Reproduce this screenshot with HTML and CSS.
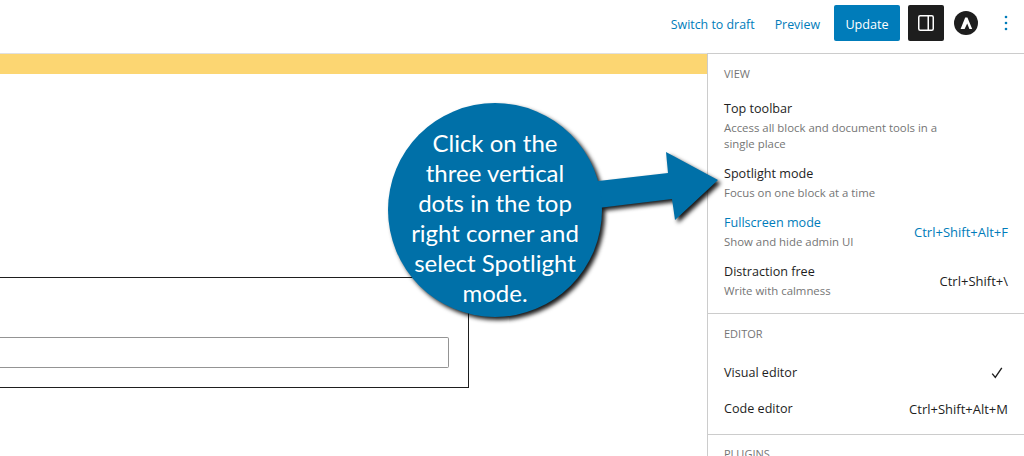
FILE: index.html
```html
<!DOCTYPE html>
<html lang="en">
<head>
    <meta charset="UTF-8">
    <meta name="viewport" content="width=device-width, initial-scale=1.0">
    <title>Spotlight mode</title>
    <link rel="stylesheet" href="styles.css">
</head>
<body>

    <header class="topbar">
        <a class="top-link">Switch to draft</a>
        <a class="top-link preview-link">Preview</a>
        <button class="update-btn" type="button">Update</button>
        <button class="sidebar-btn" type="button">
            <svg width="24" height="24" viewBox="0 0 24 24">
                <rect x="4.75" y="4.75" width="14.5" height="14.5" rx="1.5" fill="none" stroke="#fff" stroke-width="1.5"/>
                <rect x="13.5" y="5" width="1.5" height="14" fill="#fff"/>
            </svg>
        </button>
        <div class="astra-logo">
            <svg width="24" height="24" viewBox="0 0 24 24">
                <circle cx="12" cy="12" r="12" fill="#1e1e1e"/>
                <path d="M11.2 6.5 L13.4 6.5 L18.2 18 L15.4 18 L13.2 12.6 L10.6 18 L6.6 18 Z" fill="#fff"/>
            </svg>
        </div>
        <button class="dots-btn" type="button">
            <svg width="24" height="24" viewBox="0 0 24 24">
                <circle cx="12" cy="6" r="1.3" fill="#007cba"/>
                <circle cx="12" cy="12" r="1.3" fill="#007cba"/>
                <circle cx="12" cy="18" r="1.3" fill="#007cba"/>
            </svg>
        </button>
    </header>

    <div class="workspace">
        <main class="editor">
            <div class="notice"></div>
            <div class="block">
                <div class="block-input"></div>
            </div>
        </main>

        <aside class="menu">
            <section class="menu-group view-group">
                <h3>View</h3>
                <div class="menu-item first-item">
                    <div>
                        <div class="item-label">Top toolbar</div>
                        <div class="item-desc">Access all block and document tools in a single place</div>
                    </div>
                </div>
                <div class="menu-item">
                    <div>
                        <div class="item-label">Spotlight mode</div>
                        <div class="item-desc">Focus on one block at a time</div>
                    </div>
                </div>
                <div class="menu-item active">
                    <div>
                        <div class="item-label">Fullscreen mode</div>
                        <div class="item-desc">Show and hide admin UI</div>
                    </div>
                    <span class="shortcut">Ctrl+Shift+Alt+F</span>
                </div>
                <div class="menu-item">
                    <div>
                        <div class="item-label">Distraction free</div>
                        <div class="item-desc">Write with calmness</div>
                    </div>
                    <span class="shortcut">Ctrl+Shift+\</span>
                </div>
            </section>
            <section class="menu-group editor-group">
                <h3>Editor</h3>
                <div class="menu-item simple-item">
                    <div class="item-label">Visual editor</div>
                    <svg class="check" width="24" height="24" viewBox="0 0 24 24">
                        <path d="M7.2 12.6 L10.3 16.4 L16.8 6.8" fill="none" stroke="#1e1e1e" stroke-width="1.4"/>
                    </svg>
                </div>
                <div class="menu-item simple-item">
                    <div class="item-label">Code editor</div>
                    <span class="shortcut">Ctrl+Shift+Alt+M</span>
                </div>
            </section>
            <section class="menu-group">
                <h3>Plugins</h3>
            </section>
        </aside>
    </div>

    <!-- annotation drawn on top of the screenshot -->
    <div class="callout">
        <svg class="callout-shape" width="340" height="224" viewBox="0 0 340 224">
            <path d="M206 78.5 L280 70 L278 49 L330 77 L287 117 L284 96 L206 105.5 Z" fill="#0070a8"/>
            <circle cx="107" cy="107" r="107" fill="#0070a8"/>
        </svg>
        <div class="callout-text">Click on the<br>three vertical<br>dots in the top<br>right corner and<br>select Spotlight<br>mode.</div>
    </div>

</body>
</html>
```

FILE: styles.css
```css
body {
    font-family: "Open Sans", "Noto Sans", sans-serif;
    margin: 0;
    padding: 0;
    height: 456px;
    overflow: hidden;
    background-color: white;
    color: #1e1e1e;
    position: relative;
}
button {
    font-family: inherit;
    border: none;
    padding: 0;
}

/* top bar */
.topbar {
    height: 46px;
    padding: 0 6px 7px 0;
    border-bottom: 1px solid #e0e0e0;
    display: flex;
    align-items: center;
    justify-content: flex-end;
}
.top-link {
    color: #007cba;
    font-size: 12.4px;
    margin-top: 2px;
    margin-right: 20px;
}
.preview-link {
    margin-right: 14px;
}
.update-btn {
    width: 66px;
    height: 36px;
    margin-right: 8px;
    background-color: #007cba;
    color: white;
    font-size: 12.6px;
    padding-top: 2px;
    border-radius: 2px;
}
.sidebar-btn {
    width: 36px;
    height: 36px;
    margin-right: 10px;
    background-color: #1e1e1e;
    border-radius: 2px;
    display: flex;
    align-items: center;
    justify-content: center;
}
.astra-logo {
    width: 24px;
    height: 24px;
    margin-right: 16px;
}
.astra-logo svg, .dots-btn svg, .sidebar-btn svg {
    display: block;
}
.dots-btn {
    width: 24px;
    height: 36px;
    background: none;
    display: flex;
    align-items: center;
    justify-content: center;
}

/* content */
.workspace {
    display: flex;
    height: 402px;
}
.editor {
    flex: 1;
    min-width: 0;
}
.notice {
    height: 20px;
    background-color: #fcd672;
}
.block {
    box-sizing: border-box;
    width: 469px;
    height: 111px;
    margin-top: 203px;
    border: 1px solid #1e1e1e;
    border-left: none;
    padding: 59px 19px 0 0;
}
.block-input {
    height: 31px;
    box-sizing: border-box;
    border: 1px solid #949494;
    border-left: none;
    border-radius: 0 2px 2px 0;
}

/* options menu */
.menu {
    width: 317px;
    box-sizing: border-box;
    margin-top: -1px;
    border-left: 1px solid #ccc;
    border-top: 1px solid #ccc;
    background-color: white;
}
.menu-group {
    padding: 0 16px;
    border-bottom: 1px solid #ccc;
}
.menu-group:last-child {
    border-bottom: none;
}
.menu-group h3 {
    margin: 0;
    font-size: 11px;
    font-weight: 400;
    line-height: 16px;
    text-transform: uppercase;
    color: #757575;
}
.view-group {
    padding-top: 12px;
    height: 260px;
    box-sizing: border-box;
}
.editor-group {
    padding-top: 12px;
    height: 121px;
    box-sizing: border-box;
}
.menu-group:last-child h3 {
    padding-top: 11px;
}
.menu-item {
    display: flex;
    align-items: center;
    justify-content: space-between;
    margin-bottom: 11px;
}
.first-item {
    margin-top: 16px;
}
.item-label {
    font-size: 12.6px;
    line-height: 20px;
    padding-top: 1px;
}
.item-desc {
    font-size: 11.4px;
    line-height: 16px;
    color: #757575;
    max-width: 230px;
    margin-top: 1px;
}
.shortcut {
    font-size: 13px;
    white-space: nowrap;
    padding-top: 2px;
}
.active .item-label, .active .shortcut {
    color: #007cba;
}
.simple-item {
    box-sizing: border-box;
    height: 36px;
    margin-bottom: 0;
    padding-top: 2px;
}
.simple-item .item-label, .simple-item .shortcut {
    padding-top: 0;
}
.editor-group h3 {
    margin-bottom: 12px;
}
.check {
    margin-right: -1px;
}

/* callout */
.callout {
    position: absolute;
    left: 388px;
    top: 103px;
    width: 340px;
    height: 224px;
}
.callout-shape {
    display: block;
    filter: drop-shadow(3px 3px 2px rgba(0, 0, 0, 0.9));
}
.callout-text {
    position: absolute;
    left: 0;
    top: 25px;
    width: 214px;
    text-align: center;
    color: white;
    font-family: Lato, "Open Sans", sans-serif;
    font-size: 24px;
    line-height: 30px;
}
```
